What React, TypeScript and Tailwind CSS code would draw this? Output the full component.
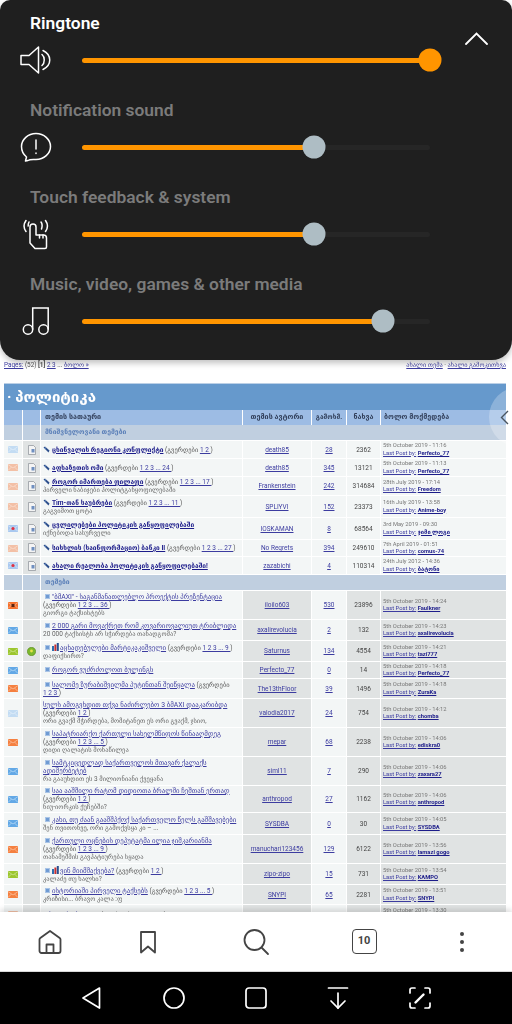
import React from 'react'

// ─── Volume panel ─────────────────────────────────────────────────────────────

function SpeakerIcon() {
  return (
    <svg width="32" height="28" viewBox="0 0 32 28" fill="none" stroke="white" strokeWidth="1.5" strokeLinejoin="round" strokeLinecap="round">
      <path d="M1 9.5H9L18.5 1V27L9 18.5H1Z" />
      <path d="M22 8.5C25 11 25 17 22 19.5" />
      <path d="M23 4.5C32 9 32 19 23 23.5" />
    </svg>
  )
}

function AlertIcon() {
  return (
    <svg width="32" height="30" viewBox="0 0 32 30" fill="none" stroke="white" strokeWidth="1.5" strokeLinejoin="round" strokeLinecap="round">
      <path d="M16 1.5C24 1.5 30.5 7.5 30.5 14.500S24 27.500 16 27.500C13.500 27.500 10 27 8 28.500L5.500 29L6.500 25C3.500 22.500 1.500 19 1.500 14.500C1.500 7.500 8 1.500 16 1.500Z" />
      <path d="M16 8V17" />
      <path d="M16 21V21.600" />
    </svg>
  )
}

function TouchIcon() {
  return (
    <svg width="26" height="32" viewBox="0 0 26 32" fill="none" stroke="white" strokeWidth="1.5" strokeLinejoin="round" strokeLinecap="round">
      <path d="M7 25V9A3 3 0 0 1 13 9V17H20.500A3 3 0 0 1 23.500 20V29A1.500 1.500 0 0 1 22 30.500H12L7 25Z" />
      <path d="M3 2.500C0.500 6 0.500 10 3 13.500" />
      <path d="M6 4C5 6 5 7 5.200 8" />
      <path d="M22.500 2.500C25 6 25 10 22.500 13.500" />
      <path d="M18 4C19.500 6 19.500 8 18.500 11" />
      <path d="M16.500 17V20" />
      <path d="M20 17V20" />
    </svg>
  )
}

function MusicIcon() {
  return (
    <svg width="28" height="28" viewBox="0 0 28 28" fill="none" stroke="white" strokeWidth="1.5">
      <circle cx="6" cy="22.500" r="4.700" />
      <circle cx="21.500" cy="22.500" r="4.700" />
      <path d="M10.700 22.500V1H26.200V22.500" />
    </svg>
  )
}

const sliders = [
  { label: 'Ringtone', value: 100, active: true, icon: <SpeakerIcon /> },
  { label: 'Notification sound', value: 66.7, active: false, icon: <AlertIcon /> },
  { label: 'Touch feedback & system', value: 66.7, active: false, icon: <TouchIcon /> },
  { label: 'Music, video, games & other media', value: 86.5, active: false, icon: <MusicIcon /> },
]

function VolumePanel() {
  return (
    <div className="relative z-10 h-[360px] shrink-0 flex flex-col gap-[13px] pt-[11px] rounded-t-[10px] rounded-b-[20px] bg-[#1f1f1f] shadow-[0_3px_6px_rgba(0,0,0,0.25)]">
      {sliders.map((s) => (
        <div key={s.label}>
          <p className={`pl-[30px] h-[24px] text-[17.4px] leading-[24px] font-semibold ${s.active ? 'text-white' : 'text-[#7b7b7b]'}`}>
            {s.label}
          </p>
          <div className="flex items-center h-[50px]">
            <div className="w-[82px] pr-[10px] flex justify-center shrink-0">{s.icon}</div>
            <div className="relative w-[348px] h-[5px] rounded-full bg-[#262626]">
              <div className="h-full rounded-full bg-[#ff9500]" style={{ width: `${s.value}%` }} />
              <div
                className={`absolute top-1/2 w-[23px] h-[23px] -translate-x-1/2 -translate-y-1/2 rounded-full ${s.active ? 'bg-[#ff9500]' : 'bg-[#aebdc4]'}`}
                style={{ left: `${s.value}%` }}
              />
            </div>
          </div>
        </div>
      ))}
      <svg className="absolute left-[465px] top-[32px]" width="23" height="13" viewBox="0 0 23 13" fill="none" stroke="white" strokeWidth="1.8" strokeLinecap="round">
        <path d="M1 12L11.500 1.500L22 12" />
      </svg>
    </div>
  )
}

// ─── Forum table ──────────────────────────────────────────────────────────────

const GRID = 'grid grid-cols-[18px_17px_201px_68px_34px_33px_125px] gap-x-px'

type Env = 'light' | 'salmon' | 'orange' | 'blue' | 'green' | 'lightDot' | 'orangeDot'

const envColors: Record<Env, { fill: string; line: string }> = {
  light: { fill: '#c3dcf3', line: '#eaf3fb' },
  salmon: { fill: '#f3c0a6', line: '#fbe6da' },
  orange: { fill: '#f58040', line: '#fcd2b8' },
  blue: { fill: '#62a8e6', line: '#cfe5f8' },
  green: { fill: '#9cc62e', line: '#dcefb0' },
  lightDot: { fill: '#a9c8ef', line: '#e4eefa' },
  orangeDot: { fill: '#f5702c', line: '#fcd2b8' },
}

function Envelope({ kind }: { kind: Env }) {
  const { fill, line } = envColors[kind]
  return (
    <svg width="10" height="7" viewBox="0 0 10 7">
      <rect width="10" height="7" fill={fill} />
      <path d="M0 0.5L5 4L10 0.5M0 6.5L3.5 3M10 6.5L6.5 3" fill="none" stroke={line} strokeWidth="0.6" />
      {kind === 'lightDot' && <circle cx="5" cy="3.5" r="1.6" fill="#e03040" />}
      {kind === 'orangeDot' && <rect x="3.5" y="2" width="3" height="3" fill="#5a2410" />}
    </svg>
  )
}

function DocIcon() {
  return (
    <svg width="8" height="10" viewBox="0 0 8 10">
      <path d="M0.5 0.5H5.5L7.5 2.5V9.5H0.5Z" fill="#f4f4f4" stroke="#8a8f96" strokeWidth="0.7" />
      <rect x="3.5" y="4" width="3" height="3.5" fill="#6f8fc0" />
    </svg>
  )
}

function HotBall() {
  return (
    <svg width="9" height="9" viewBox="0 0 9 9">
      <circle cx="4.5" cy="4.5" r="4.2" fill="#7cb82c" stroke="#4e7c18" strokeWidth="0.5" />
      <circle cx="4.5" cy="4" r="1.4" fill="#e8e24a" />
    </svg>
  )
}

function PinIcon() {
  return (
    <svg className="inline-block mr-[2px] align-[-1px]" width="7" height="7" viewBox="0 0 7 7">
      <path d="M0.5 1.5L2 0.5L6.5 4.5L5.5 6.5Z" fill="#2d4f8c" />
      <path d="M1 3L3 1.5" stroke="#8fb0dc" strokeWidth="0.8" />
    </svg>
  )
}

function TopicIcon() {
  return <span className="inline-block w-[5px] h-[5px] mr-[2px] ml-[2px] bg-[#6f9bd3] border border-[#a9c4e6]" />
}

function BooksIcon() {
  return (
    <svg className="inline-block mr-[1px] align-[-1px]" width="7" height="8" viewBox="0 0 7 8">
      <rect x="0" y="3" width="2" height="5" fill="#2d6fb0" />
      <rect x="2.4" y="1.5" width="2" height="6.5" fill="#c83030" />
      <rect x="4.8" y="0" width="2" height="8" fill="#285090" />
    </svg>
  )
}

interface Topic {
  h: string
  env: Env
  pinned?: boolean
  hot?: boolean
  books?: boolean
  noIcon?: boolean
  title: string
  pages?: string
  sub?: string
  wrapPages?: boolean
  wrapNums?: boolean
  author: string
  replies: string
  views: string
  date: string
  last: string
}

const pinnedTopics: Topic[] = [
  { h: 'h-[17px]', env: 'light', pinned: true, title: 'ცხინვალის რეგიონი კონფლიქტი', pages: '1 2 ', author: 'death85', replies: '28', views: '2362', date: '5th October 2019 - 11:16', last: 'Perfecto_77' },
  { h: 'h-[17px]', env: 'salmon', pinned: true, title: 'აფხაზეთის ომი', pages: '1 2 3 ... 24 ', author: 'death85', replies: '345', views: '13121', date: '5th October 2019 - 11:13', last: 'Perfecto_77' },
  { h: 'h-[18px]', env: 'salmon', pinned: true, title: 'როგორ იმართება ფილაფი', pages: '1 2 3 ... 17 ', sub: 'პირველი ნაბიჯები პოლიტგანყოფილებაში', author: 'Frankenstein', replies: '242', views: '314684', date: '28th July 2019 - 17:14', last: 'Freedom' },
  { h: 'h-[21px]', env: 'salmon', pinned: true, title: 'Tim-თან საუბრები', pages: '1 2 3 ... 11 ', sub: 'გაგვიმოთ ცოტა', author: 'SPLIYVI', replies: '152', views: '23373', date: '16th July 2019 - 13:58', last: 'Anime-boy' },
  { h: 'h-[21px]', env: 'lightDot', pinned: true, title: 'ცვლილებები პოლიტიკის განყოფილებაში', sub: 'იქნებოდა სასურველი', author: 'IOSKAMAN', replies: '8', views: '68564', date: '3rd May 2019 - 09:30', last: 'ჯიმი ლოგი' },
  { h: 'h-[16px]', env: 'salmon', pinned: true, title: 'სისხლის (საინფორმაციო) ბანკი II', pages: '1 2 3 ... 27 ', author: 'No Regrets', replies: '394', views: '249610', date: '7th April 2019 - 01:51', last: 'comus-74' },
  { h: 'h-[17px]', env: 'lightDot', pinned: true, title: 'ახალი რეალობა პოლიტიკის განყოფილებაში!', author: 'zazabichi', replies: '4', views: '110314', date: '24th July 2012 - 14:36', last: 'ბატონი' },
]

const topics: Topic[] = [
  { h: 'h-[28px]', env: 'orangeDot', title: '"ბმAXI" - საგანმანათლებლო პროექტის პრეზენტაცია', pages: '1 2 3 ... 36 ', wrapPages: true, sub: 'გიორგი ტაქსისტებს', author: 'iloilo603', replies: '530', views: '23896', date: '5th October 2019 - 14:24', last: 'Faulkner' },
  { h: 'h-[20px]', env: 'blue', title: '2 000 გარი მოვაქრეთ რომ კოვარიოვალიუთ ტრიბლიდა', sub: '20 000 ტაქსისტს არ სჭირდება თანადგომა?', author: 'axalirevolucia', replies: '2', views: '132', date: '5th October 2019 - 14:23', last: 'axalirevolucia' },
  { h: 'h-[20px]', env: 'green', hot: true, books: true, title: 'აცხადებულები მარტიკაკიშველი', pages: '1 2 3 ... 9 ', sub: 'დაფიქსირთ?', author: 'Saturnus', replies: '134', views: '4554', date: '5th October 2019 - 14:21', last: 'tazi777' },
  { h: 'h-[16px]', env: 'blue', title: 'როგორ ვუძრძოლოთ ბულინგს', author: 'Perfecto_77', replies: '0', views: '14', date: '5th October 2019 - 14:18', last: 'Perfecto_77' },
  { h: 'h-[19px]', env: 'orange', title: 'სალომე ზურაბიშვილმა პუტინთან შეიწყალა', pages: '1 2 3 ', wrapNums: true, author: 'The13thFloor', replies: '39', views: '1496', date: '5th October 2019 - 14:18', last: 'ZuraKa' },
  { h: 'h-[28px]', env: 'light', noIcon: true, title: 'სულს ამოგვხდით თქვა ნაძირლებო 3 ბმAXI დააკარიბდა', pages: '1 2 ', wrapPages: true, sub: 'ორი გვაქმ მჭირდება, მომიტანეთ ეს ორი გვაქმ, ჯსიო,', author: 'valodia2017', replies: '24', views: '754', date: '5th October 2019 - 14:12', last: 'chomba' },
  { h: 'h-[28px]', env: 'orange', title: 'საპატრიარქო ქართული სახელმწიფოს წინააღმდეგ', pages: '1 2 3 ... 5 ', wrapPages: true, sub: 'დიდი ღალატის მონაწილეა', author: 'mepar', replies: '68', views: '2238', date: '5th October 2019 - 14:06', last: 'ediskra0' },
  { h: 'h-[28px]', env: 'blue', title: 'სამტკიცედლად საქართველოს მთავარ ქალაქს\nადიშერბეტებ', sub: 'რა გააუხდით ეს 3 მილიონიანი ქვეყანა', author: 'siml11', replies: '7', views: '290', date: '5th October 2019 - 14:06', last: 'zaxara27' },
  { h: 'h-[26px]', env: 'blue', title: 'საა ააშშილი რატომ დიდიოთა ბრალში ჩეშთან ერთად', pages: '1 2 ', wrapPages: true, sub: 'ნიუ-იორკის ქუჩებში?', author: 'anthropod', replies: '27', views: '1162', date: '5th October 2019 - 14:06', last: 'anthropod' },
  { h: 'h-[21px]', env: 'blue', title: 'კახი, თუ ძაან გააშშპქოქ საქართველო წელს გაშშავებები', sub: 'შენ თვითონვე, ორი გამოქვსყა კი – ...', author: 'SYSDBA', replies: '0', views: '30', date: '5th October 2019 - 14:05', last: 'SYSDBA' },
  { h: 'h-[28px]', env: 'orange', title: 'ქართული ოცნების დეპუტატმა ილია ჯიშკარიანმა', pages: '1 2 3 ... 9 ', wrapPages: true, sub: 'თანამეშმის გავპატიურება სყადა', author: 'manuchari123456', replies: '129', views: '6122', date: '5th October 2019 - 13:56', last: 'lamazi gogo' },
  { h: 'h-[20px]', env: 'green', books: true, title: 'ვინ მიიმშაქვება?', pages: '1 2 ', sub: 'კალაძე თუ ხალხი?', author: 'zipo-zipo', replies: '15', views: '731', date: '5th October 2019 - 13:54', last: 'KAMPO' },
  { h: 'h-[19px]', env: 'orange', title: 'ისტორიაში პირველი ტაქსებს', pages: '1 2 3 ... 5 ', sub: 'კრიზისი... ბრავო კალა :ფ', author: 'SNYPI', replies: '65', views: '2281', date: '5th October 2019 - 13:51', last: 'SNYPI' },
  { h: 'h-[19px]', env: 'salmon', noIcon: true, title: 'თბილისობა 2019', pages: '1 2 3 ... 5 ', author: 'Orlando', replies: '15', views: '3112', date: '5th October 2019 - 13:30', last: 'Perfecto_77' },
]

const geo = "font-['Roboto','DejaVu_Sans',sans-serif]"

function TopicRow({ t }: { t: Topic }) {
  const light = 'bg-[#f3f6f6]'
  const dark = 'bg-[#e0e3e3]'
  const alt = t.pinned ? light : dark
  return (
    <div className={`${GRID} ${t.h} mb-px text-[6.5px] leading-[8px]`}>
      <div className={`${light} flex items-center justify-center`}><Envelope kind={t.env} /></div>
      <div className={`${dark} flex items-center justify-center`}>
        {t.pinned ? <DocIcon /> : t.hot ? <HotBall /> : null}
      </div>
      <div className={`${light} flex flex-col justify-center pl-[2px] pr-[1px] overflow-hidden`}>
        <div className="text-[#555]">
          {t.pinned && <PinIcon />}
          {!t.pinned && !t.noIcon && <TopicIcon />}
          {t.books && <BooksIcon />}
          <a className={`underline whitespace-pre-line ${t.pinned ? 'text-[6.6px] font-bold text-[#1c1c8a]' : 'text-[6.85px] text-[#3c3ca0]'}`}>{t.title}</a>
          {t.wrapPages && <br />}
          {t.pages && (
            <span>
              {' '}(გვერდები {t.wrapNums && <br />}<a className="underline text-[#3c3ca0]">{t.pages}</a>)
            </span>
          )}
        </div>
        {t.sub && <div className="text-[#666] whitespace-nowrap">{t.sub}</div>}
      </div>
      <div className={`${alt} flex items-center justify-center text-[#3c3ca0] underline whitespace-nowrap overflow-hidden`}>{t.author}</div>
      <div className={`${light} flex items-center justify-center text-[#3c3ca0] underline`}>{t.replies}</div>
      <div className={`${alt} flex items-center justify-center text-[#444]`}>{t.views}</div>
      <div className={`${alt} flex flex-col justify-center pl-[2px] text-[5.8px] leading-[7.5px] whitespace-nowrap`}>
        <span className="text-[#777]">{t.date}</span>
        <span>
          <a className="underline text-[#3c3ca0]">Last Post by:</a>{' '}
          <a className="underline font-bold text-[#1c1c8a]">{t.last}</a>
        </span>
      </div>
    </div>
  )
}

function SectionRow({ title }: { title: string }) {
  return (
    <div className={`${GRID} h-[15px] mb-px text-[6.8px] font-bold text-[#5a7fb8]`}>
      <div className="bg-[#c0cfe0]" />
      <div className="bg-[#c0cfe0]" />
      <div className="col-span-5 bg-[#c0cfe0] flex items-center pl-[4px]">{title}</div>
    </div>
  )
}

function Forum() {
  return (
    <div className={`relative flex-1 overflow-hidden bg-white px-[4px] blur-[0.35px] ${geo}`}>
      <div className="flex justify-between h-[23px] pt-[1px] text-[6.4px] leading-[8px] text-[#555]">
        <span>
          <a className="underline text-[#3c3ca0]">Pages:</a> (52) <b>[1]</b> <a className="underline text-[#3c3ca0]">2 3</a> ... <a className="underline text-[#3c3ca0]">ბოლო »</a>
        </span>
        <span className="pr-[2px]">
          <a className="underline text-[#3c3ca0]">ახალი თემა</a> · <a className="underline text-[#3c3ca0]">ახალი გამოკითხვა</a>
        </span>
      </div>
      <div className="w-[502px] border-t border-[#bcd0e6]">
        <div className="h-[26px] flex items-center pl-[3px] bg-[#6699cc] text-white text-[15px] font-bold whitespace-nowrap">· პოლიტიკა</div>
        <div className={`${GRID} h-[15px] text-[7.2px] font-bold text-[#33415c] bg-white`}>
          <div className="bg-[#9dbce4]" />
          <div className="bg-[#9dbce4]" />
          <div className="bg-[#9dbce4] flex items-center pl-[4px]">თემის სათაური</div>
          <div className="bg-[#9dbce4] flex items-center justify-center">თემის ავტორი</div>
          <div className="bg-[#9dbce4] flex items-center justify-center text-[6.6px]">გამოხმ.</div>
          <div className="bg-[#9dbce4] flex items-center justify-center">ნახვა</div>
          <div className="bg-[#9dbce4] flex items-center pl-[3px]">ბოლო მოქმედება</div>
        </div>
        <SectionRow title="მნიშვნელოვანი თემები" />
        {pinnedTopics.map((t) => <TopicRow key={t.title} t={t} />)}
        <SectionRow title="თემები" />
        {topics.map((t) => <TopicRow key={t.title} t={t} />)}
      </div>
      {/* edge handle of the browser */}
      <div className="absolute right-[-37px] top-[27px] w-[60px] h-[60px] rounded-full bg-white/25 flex items-center pl-[11px]">
        <svg width="9" height="15" viewBox="0 0 9 15" fill="none" stroke="#4a5560" strokeWidth="1.4">
          <path d="M8 1L1.500 7.500L8 14" />
        </svg>
      </div>
    </div>
  )
}

// ─── Bottom bars ──────────────────────────────────────────────────────────────

function BrowserBar() {
  return (
    <div className="relative z-10 h-[60px] shrink-0 flex items-center pl-[32px] bg-white border-b border-[#d8d8d8] shadow-[0_-3px_5px_rgba(0,0,0,0.12)] text-[#444]">
      <svg width="36" height="36" viewBox="0 0 36 36" fill="none" stroke="currentColor" strokeWidth="1.8" strokeLinejoin="round">
        <path d="M7.500 27V15.500A2 2 0 0 1 8.300 14L18 7L27.700 14A2 2 0 0 1 28.500 15.500V27A2 2 0 0 1 26.500 29H9.500A2 2 0 0 1 7.500 27Z" />
        <path d="M14.500 29V20.500H21.500V29" />
      </svg>
      <svg className="ml-[62px]" width="36" height="36" viewBox="0 0 36 36" fill="none" stroke="currentColor" strokeWidth="1.8" strokeLinejoin="round">
        <path d="M11 8H25V28.500L18 22.500L11 28.500Z" />
      </svg>
      <svg className="ml-[72px]" width="36" height="36" viewBox="0 0 36 36" fill="none" stroke="currentColor" strokeWidth="1.8" strokeLinecap="round">
        <circle cx="16.500" cy="16" r="10" />
        <path d="M23.500 23.500L30 30" />
      </svg>
      <div className="ml-[72px] w-[36px] flex justify-center">
        <div className="w-[25px] h-[25px] flex items-center justify-center rounded-[4px] border-[1.8px] border-[#444] text-[11px] font-bold">10</div>
      </div>
      <div className="ml-[62px] w-[36px] flex flex-col items-center gap-[4px]">
        <span className="w-[4px] h-[4px] rounded-full bg-[#444]" />
        <span className="w-[4px] h-[4px] rounded-full bg-[#444]" />
        <span className="w-[4px] h-[4px] rounded-full bg-[#444]" />
      </div>
    </div>
  )
}

function NavBar() {
  return (
    <div className="h-[52px] shrink-0 flex items-center justify-center gap-[48px] bg-black">
      <svg width="34" height="34" viewBox="0 0 34 34" fill="none" stroke="white" strokeWidth="1.7" strokeLinejoin="round">
        <path d="M24.500 7L8 17L24.500 27Z" />
      </svg>
      <svg width="34" height="34" viewBox="0 0 34 34" fill="none" stroke="white" strokeWidth="1.700">
        <circle cx="17" cy="17" r="10" />
      </svg>
      <svg width="34" height="34" viewBox="0 0 34 34" fill="none" stroke="white" strokeWidth="1.700">
        <rect x="7" y="7" width="20" height="20" rx="3" />
      </svg>
      <svg width="34" height="34" viewBox="0 0 34 34" fill="none" stroke="white" strokeWidth="1.700" strokeLinecap="round">
        <path d="M7.500 7H26.500" />
        <path d="M17 12V27" />
        <path d="M10 20L17 27L24 20" />
      </svg>
      <svg width="34" height="34" viewBox="0 0 34 34" fill="none" stroke="white" strokeWidth="1.700" strokeLinecap="round">
        <path d="M7 12V9A2 2 0 0 1 9 7H12" />
        <path d="M22 7H25A2 2 0 0 1 27 9V12" />
        <path d="M27 22V25A2 2 0 0 1 25 27H22" />
        <path d="M12 27H9A2 2 0 0 1 7 25V22" />
        <path d="M12.500 21.500L20.500 13.500" strokeWidth="2.400" />
      </svg>
    </div>
  )
}

export default function App() {
  return (
    <div className="w-[512px] h-[1024px] flex flex-col overflow-hidden bg-white font-['Roboto',sans-serif]">
      <VolumePanel />
      <Forum />
      <BrowserBar />
      <NavBar />
    </div>
  )
}
